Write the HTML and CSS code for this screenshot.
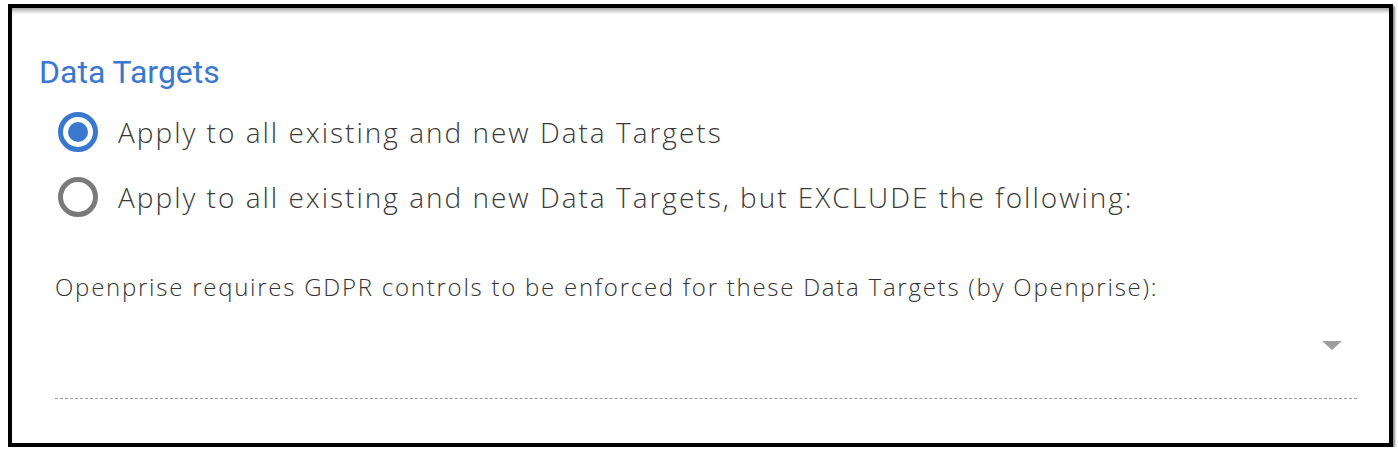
FILE: index.html
```html
<!DOCTYPE html>
<html lang="en">
<head>
    <meta charset="UTF-8">
    <title>Data Targets</title>
    <link rel="stylesheet" href="styles.css">
</head>
<body>

<div class="frame">
    <div class="panel">
        <h2 class="section-title">Data Targets</h2>

        <div class="options">
            <label class="option">
                <span class="radio checked"></span>
                <span class="option-text">Apply to all existing and new Data Targets</span>
            </label>
            <label class="option">
                <span class="radio"></span>
                <span class="option-text">Apply to all existing and new Data Targets, but EXCLUDE the following:</span>
            </label>
        </div>

        <div class="field">
            <div class="field-label">Openprise requires GDPR controls to be enforced for these Data Targets (by Openprise):</div>
            <div class="select">
                <span class="caret"></span>
            </div>
        </div>
    </div>
</div>

</body>
</html>
```

FILE: styles.css
```css
body {
    margin: 0;
    padding: 0;
    background-color: #ffffff;
    font-family: 'Open Sans', 'Liberation Sans', sans-serif;
    overflow: hidden;
}

.frame {
    padding: 4px 0 0 8px;
}

/* Outer card with heavy black border */
.panel {
    box-sizing: border-box;
    width: 1385px;
    height: 443px;
    border: 4px solid #000000;
    background-color: #ffffff;
    box-shadow: 2px 2px 2px rgba(0, 0, 0, 0.45), inset 0 6px 4px -3px rgba(0, 0, 0, 0.35);
    padding: 45px 32px 0 27px;
}

.section-title {
    margin: 0;
    font-family: 'Roboto', 'Liberation Sans', sans-serif;
    font-weight: 400;
    font-size: 32px;
    line-height: 38px;
    color: #3a78d0;
}

.options {
    display: flex;
    flex-direction: column;
    gap: 27px;
    margin-top: 22px;
    padding-left: 19px;
}

.option {
    display: flex;
    align-items: center;
    gap: 20px;
    height: 38px;
}

.radio {
    box-sizing: border-box;
    width: 40px;
    height: 40px;
    border-radius: 50%;
    border: 5px solid #7a7a7a;
    display: flex;
    align-items: center;
    justify-content: center;
}

.radio.checked {
    border-color: #3a78d0;
}

.radio.checked::after {
    content: '';
    width: 20px;
    height: 20px;
    border-radius: 50%;
    background-color: #3a78d0;
}

.option-text {
    font-size: 28px;
    font-weight: 300;
    letter-spacing: 2px;
    color: #3a3a3a;
}

.field {
    margin-top: 56px;
    padding-left: 16px;
}

.field-label {
    font-size: 24px;
    line-height: 30px;
    font-weight: 300;
    letter-spacing: 1.75px;
    color: #333333;
}

.select {
    height: 96px;
    border-bottom: 1px dashed #9a9a9a;
    display: flex;
    justify-content: flex-end;
    align-items: center;
}

.caret {
    width: 0;
    height: 0;
    border-left: 10px solid transparent;
    border-right: 10px solid transparent;
    border-top: 9px solid #9e9e9e;
    margin: 0 15px 10px 0;
}
```
